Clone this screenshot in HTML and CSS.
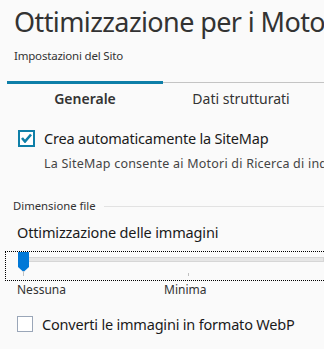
FILE: index.html
```html
<!DOCTYPE html>
<html lang="it">
<head>
    <meta charset="UTF-8">
    <meta name="viewport" content="width=device-width, initial-scale=1.0">
    <title>Ottimizzazione per i Motori di Ricerca</title>
    <link rel="stylesheet" href="styles.css">
</head>
<body>
    <div class="page">
        <h1 class="title">Ottimizzazione per i Motori di Ricerca</h1>
        <div class="subtitle">Impostazioni del Sito</div>

        <div class="tabs">
            <div class="tab active">Generale</div>
            <div class="tab">Dati strutturati</div>
            <div class="tab-rest"></div>
        </div>

        <label class="check-row first">
            <span class="check checked">
                <svg width="11" height="10" viewBox="0 0 11 10"><path d="M1 5 L4 8.5 L10 1.5" fill="none" stroke="#0e7fa8" stroke-width="2.6"/></svg>
            </span>
            <span class="check-label">Crea automaticamente la SiteMap</span>
        </label>
        <div class="hint">La SiteMap consente ai Motori di Ricerca di indicizzare il sito più velocemente</div>

        <div class="group-title">
            <span>Dimensione file</span>
            <div class="group-line"></div>
        </div>

        <div class="field-label">Ottimizzazione delle immagini</div>
        <div class="slider">
            <div class="track"></div>
            <div class="thumb">
                <svg width="11" height="20" viewBox="0 0 11 20"><path d="M0 0 H11 V15 L5.5 20 L0 15 Z" fill="#0078d7"/></svg>
            </div>
            <div class="tick t1"></div>
            <div class="tick t2"></div>
        </div>
        <div class="slider-labels">
            <span class="sl1">Nessuna</span>
            <span class="sl2">Minima</span>
        </div>

        <label class="check-row second">
            <span class="check"></span>
            <span class="check-label">Converti le immagini in formato WebP</span>
        </label>
    </div>
</body>
</html>
```

FILE: styles.css
```css
body {
    margin: 0;
    background: #fafafa;
    color: #222;
    font-family: "Noto Sans", "Open Sans", sans-serif;
    overflow: hidden;
}
.page {
    width: 324px;
    height: 349px;
    overflow: hidden;
    white-space: nowrap;
}
.title {
    margin: 6px 0 0 14px;
    font-size: 27px;
    font-weight: 400;
    letter-spacing: -0.6px;
    line-height: 32px;
    color: #333;
}
.subtitle {
    margin: 10px 0 0 14px;
    font-size: 11.5px;
    letter-spacing: -0.2px;
    line-height: 16px;
    color: #333;
}
.tabs {
    display: flex;
    margin: 17px 0 0 7px;
}
.tab {
    width: 156px;
    flex-shrink: 0;
    margin-top: 1px;
    border-top: 1px solid #c4c4c4;
    padding-top: 6px;
    text-align: center;
    font-size: 14px;
    line-height: 20px;
    color: #333;
}
.tab.active {
    margin-top: 0;
    border-top: 3px solid #0e7fa8;
    padding-top: 5px;
    font-weight: 600;
}
.tab-rest {
    flex: 1;
    margin-top: 1px;
    border-top: 1px solid #c4c4c4;
}
.check-row {
    display: flex;
    align-items: center;
}
.check-row.first {
    margin: 19px 0 0 18px;
}
.check {
    width: 13px;
    height: 13px;
    border: 2px solid #0e7fa8;
    background: #fff;
    display: flex;
    align-items: center;
    justify-content: center;
    flex-shrink: 0;
}
.check-label {
    margin-left: 9px;
    font-size: 14.5px;
    letter-spacing: -0.2px;
    line-height: 20px;
    color: #1a1a1a;
}
.hint {
    margin: 7px 0 0 44px;
    font-size: 12.5px;
    letter-spacing: 0.22px;
    line-height: 18px;
    color: #444;
}
.group-title {
    display: flex;
    align-items: center;
    margin: 25px 0 0 13px;
    font-size: 11.3px;
    line-height: 16px;
    color: #333;
}
.group-line {
    flex: 1;
    height: 1px;
    margin-left: 8px;
    background: #e2e2e2;
}
.field-label {
    margin: 8px 0 0 17px;
    font-size: 14.5px;
    letter-spacing: -0.15px;
    line-height: 20px;
    color: #1a1a1a;
}
.slider {
    position: relative;
    margin: 9px 0 0 5px;
    height: 28px;
    border: 1px dotted #000;
    border-right: none;
}
.track {
    position: absolute;
    left: 13px;
    right: 0;
    top: 5px;
    height: 3px;
    background: #e6e6e6;
    border: 1px solid #d6d6d6;
}
.thumb {
    position: absolute;
    left: 12px;
    top: 0;
    height: 20px;
}
.tick {
    position: absolute;
    width: 1px;
    background: #c0c0c0;
    bottom: 4px;
}
.t1 {
    left: 17px;
    height: 5px;
}
.t2 {
    left: 182px;
    height: 3px;
}
.slider-labels {
    position: relative;
    height: 18px;
    font-size: 12px;
    line-height: 18px;
    color: #333;
}
.sl1 {
    margin-left: 17px;
}
.sl2 {
    position: absolute;
    left: 164px;
}
.check-row.second {
    margin: 15px 0 0 17px;
}
.check-row.second .check {
    width: 14px;
    height: 14px;
    border: 1px solid #9aa6b8;
}
```
